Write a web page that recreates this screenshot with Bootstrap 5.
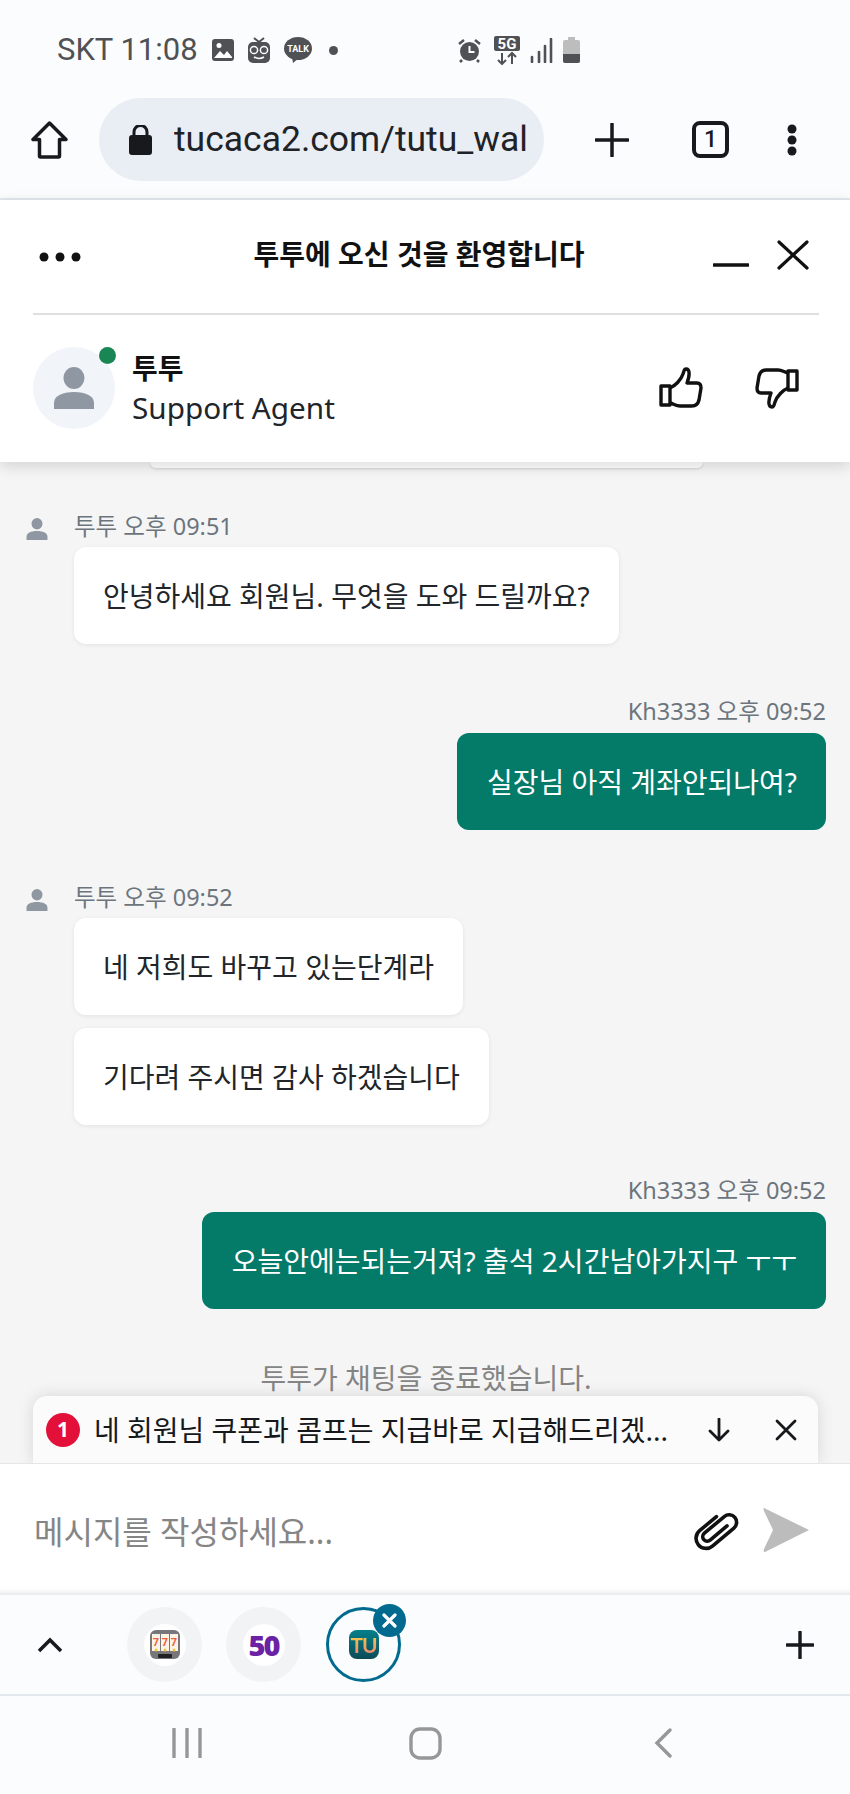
<!DOCTYPE html>
<html lang="ko">
<head>
  <meta charset="UTF-8" />
  <meta name="viewport" content="width=device-width, initial-scale=1.0"/>
  <title>투투 채팅</title>
  <link href="https://cdn.jsdelivr.net/npm/bootstrap@5.3.0/dist/css/bootstrap.min.css" rel="stylesheet">
  <style>
    html, body { margin: 0; background: #fbfcfe; }
    body { font-family: "Noto Sans", "Noto Sans CJK KR", sans-serif; }
    .phone { width: 850px; height: 1794px; overflow: hidden; }

    /* android status bar + browser toolbar */
    .statusbar { height: 90px; padding: 10px 0 0 57px; background: #fbfcfe; color: #4f5154; font-family: Roboto, sans-serif; font-size: 31px; }
    .status-time { width: 154px; }
    .status-ico { margin-right: 12px; }
    .status-ico-tight { margin-right: 10px; }
    .status-dot { width: 9px; height: 9px; border-radius: 50%; background: #4f5154; margin: 0 119px 0 16px; }
    .toolbar { height: 110px; padding: 0 0 9px 31px; background: #fbfcfe; border-bottom: 2px solid #e3e8ee; }
    .url-pill { width: 445px; height: 83px; margin-left: 31px; padding-left: 30px; border-radius: 42px; background: #e8eef3; color: #1f2226; font-family: Roboto, sans-serif; font-size: 35.5px; }
    .url-text { width: 352px; margin-left: 22px; overflow: hidden; white-space: nowrap; }
    .tool-plus { margin-left: 51px; }
    .tool-tabs { margin-left: 63px; width: 37px; height: 37px; border: 4px solid #17191c; border-radius: 8px; font: 500 23px Roboto, sans-serif; color: #17191c; }
    .tool-more { margin-left: 57px; }

    /* chat header */
    .chat-head { height: 262px; padding: 0 31px 0 33px; background: #fff; box-shadow: 0 4px 14px rgba(0,0,0,.14); position: relative; z-index: 3; }
    .head-top { height: 115px; border-bottom: 2px solid #dedfe0; }
    .head-dots { width: 42px; margin-left: 6px; }
    .head-title { font-size: 28px; font-weight: 700; color: #111; width: 632px; text-align: center; margin-left: 22px; padding-bottom: 6px; white-space: nowrap; }
    .head-min { margin-left: -22px; margin-top: 3px; }
    .head-close { margin-left: 28px; margin-bottom: 4px; }
    .agent-row { padding-top: 32px; }
    .agent-pic { width: 82px; height: 82px; border-radius: 50%; background: #f1f5f9; position: relative; flex: none; }
    .agent-dot { position: absolute; right: -1px; top: 0; width: 17px; height: 17px; border-radius: 50%; background: #198754; }
    .agent-name { font-size: 28px; font-weight: 700; color: #111; line-height: 40px; margin-top: 1px; margin-left: -1px; }
    .agent-role { font-size: 29.7px; color: #212529; line-height: 40px; margin-left: -1px; }
    .agent-text { margin-left: 18px; }
    .agent-thumbs { margin-left: auto; margin-right: 20px; gap: 52px; }

    /* messages */
    .chat-body { height: 1001px; background: #f5f5f5; padding: 0 24px 0 26px; position: relative; overflow: hidden; }
    .peek-bubble { height: 6px; margin: 0 123px 43px 124px; background: #fff; border-radius: 0 0 12px 12px; box-shadow: 0 1px 3px rgba(0,0,0,.14); }
    .msg-meta { height: 30px; line-height: 30px; font-size: 23.5px; color: #6c757d; margin-bottom: 6px; }
    .msg-out .msg-meta { margin-bottom: 7px; }
    .meta-ico { width: 48px; }
    .bubble { height: 97px; padding: 0 29px; border-radius: 12px; font-size: 28px; white-space: nowrap; }
    .bubble-in { background: #fff; color: #212529; margin-left: 48px; box-shadow: 0 1px 4px rgba(0,0,0,.08); }
    .bubble-out { background: #047a69; color: #fff; padding-left: 30px; }
    .bubble-gap { margin-bottom: 13px; }
    .msg-in, .msg-out { margin-bottom: 52px; }
    .msg-in.msg-tight { margin-bottom: 50px; }
    .ended-note { font-size: 28px; color: #858585; text-align: center; margin-top: -3px; line-height: 40px; }
    .notify-bar { position: absolute; left: 33px; right: 32px; bottom: 0; height: 67px; background: #fbfbfb; border-radius: 14px 14px 0 0; box-shadow: 0 0 16px rgba(0,0,0,.13); padding-left: 13px; }
    .notify-count { width: 34px; height: 34px; border-radius: 50%; background: #e31039; color: #fff; font-size: 21px; font-weight: 700; flex: none; }
    .notify-text { font-size: 28px; color: #16181b; margin-left: 14px; width: 575px; white-space: nowrap; overflow: hidden; }
    .notify-down { margin-left: 39px; }
    .notify-close { margin-left: 45px; }

    /* composer */
    .composer { height: 132px; background: #fff; border-top: 1px solid #e6e6e6; padding: 0 40px 0 34px; box-shadow: inset 0 -7px 7px -6px rgba(0,0,0,.14); }
    .composer-input { font-size: 32px; color: #858585; margin-top: 5px; }
    .composer-clip { margin-left: auto; margin-right: 20px; }

    /* bottom tabs + android nav */
    .tabbar { height: 101px; background: #fbfcfe; border-bottom: 2px solid #e3e8ee; padding-left: 37px; }
    .tab-bubbles { margin-left: 64px; gap: 24px; }
    .tab-circle { width: 75px; height: 75px; border-radius: 50%; background: #f2f3f5; position: relative; }
    .tab-face { width: 42px; height: 42px; border-radius: 50%; background: #fff; }
    .tab-active { margin-left: 1px; background: #fbfcfe; border: 3px solid #016b8f; }
    .fifty { font: 800 29px/1 "Open Sans", sans-serif; letter-spacing: -2px; color: #6b22a5; }
    .tu-logo { width: 30px; height: 29px; border-radius: 8px; background: linear-gradient(#047f8a, #0b4c58); font: 700 21px/29px Lato, sans-serif; letter-spacing: -1px; text-align: center; color: #f6c84a; }
    .tu-text { background: linear-gradient(#f7d43f, #ee7f78); -webkit-background-clip: text; background-clip: text; color: transparent; }
    .tab-x { position: absolute; right: -8px; top: -6px; width: 33px; height: 33px; border-radius: 50%; background: #016b8f; }
    .tab-plus { margin-left: auto; margin-right: 36px; }
    .navbar-android { height: 98px; background: #fbfcfe; padding-bottom: 4px; }
    .nav-slot { width: 238px; }
  </style>
</head>
<body>
<div class="phone d-flex flex-column">

  <div class="statusbar d-flex align-items-center">
    <span class="status-time">SKT 11:08</span>
    <svg class="status-ico" width="24" height="24" viewBox="0 0 24 24"><rect x="1" y="1" width="22" height="22" rx="3" fill="#4f5154"/><path d="M3 20l6-7 4 4 3-4 5 6v1H3z" fill="#fff"/><circle cx="8" cy="7.500" r="2.500" fill="#fff"/></svg>
    <svg class="status-ico" width="24" height="26" viewBox="0 0 24 26"><path d="M7 1l5 4 5-4" fill="none" stroke="#4f5154" stroke-width="2"/><rect x="1" y="5" width="22" height="21" rx="5" fill="#4f5154"/><circle cx="7" cy="13" r="3.600" fill="none" stroke="#fff" stroke-width="1.500"/><circle cx="17" cy="13" r="3.600" fill="none" stroke="#fff" stroke-width="1.500"/><path d="M7 20q5 3 10 0" fill="none" stroke="#fff" stroke-width="1.500"/></svg>
    <svg width="30" height="26" viewBox="0 0 30 26"><ellipse cx="15" cy="11.500" rx="14" ry="11.500" fill="#4f5154"/><path d="M9 20l1 6 6-5z" fill="#4f5154"/><text x="15" y="15" font-size="9" font-weight="700" text-anchor="middle" fill="#fff" font-family="Roboto, sans-serif">TALK</text></svg>
    <span class="status-dot"></span>
    <svg class="status-ico" width="25" height="25" viewBox="0 0 25 25"><circle cx="12.500" cy="13.500" r="9.500" fill="#4f5154"/><path d="M2 6l5-4M23 6l-5-4" stroke="#4f5154" stroke-width="2.500"/><path d="M5 22l-2 2M20 22l2 2" stroke="#4f5154" stroke-width="2.500"/><path d="M12.500 8v6h5" fill="none" stroke="#fff" stroke-width="2"/></svg>
    <svg class="status-ico-tight" width="26" height="29" viewBox="0 0 26 29"><rect x="0" y="0" width="26" height="15" rx="2" fill="#4f5154"/><text x="13" y="13" font-size="15" font-weight="700" text-anchor="middle" fill="#fff" font-family="Roboto, sans-serif">5G</text><path d="M8 17v11M4 24l4 4 4-4M18 28V17M14 21l4-4 4 4" fill="none" stroke="#4f5154" stroke-width="2"/></svg>
    <svg class="status-ico-tight" width="23" height="25" viewBox="0 0 23 25"><path d="M2 19v5M9 14v10M15 8v16M21 1v23" stroke="#4f5154" stroke-width="2.600" stroke-linecap="round" fill="none"/></svg>
    <svg width="17" height="26" viewBox="0 0 17 26"><path d="M5 0h7v3h3q2 0 2 2v19q0 2-2 2H2q-2 0-2-2V5q0-2 2-2h3z" fill="#bdbdbd"/><path d="M0 17h17v7q0 2-2 2H2q-2 0-2-2z" fill="#4f5154"/></svg>
  </div>

  <div class="toolbar d-flex align-items-center">
    <svg width="37" height="38" viewBox="0 0 37 38"><path d="M18.500 2L2 18.500h6.500V35q0 1 1 1h18q1 0 1-1V18.500H35z" fill="none" stroke="#17191c" stroke-width="3.500" stroke-linejoin="round"/></svg>
    <div class="url-pill d-flex align-items-center">
      <svg width="23" height="30" viewBox="0 0 23 30"><rect x="0" y="10" width="23" height="20" rx="3" fill="#17191c"/><path d="M5 11V7a6.500 6.500 0 0 1 13 0v4" fill="none" stroke="#17191c" stroke-width="3"/></svg>
      <div class="url-text">tucaca2.com/tutu_wal</div>
    </div>
    <svg class="tool-plus" width="34" height="34" viewBox="0 0 34 34"><path d="M17 1v32M1 17h32" stroke="#17191c" stroke-width="3.500" stroke-linecap="round"/></svg>
    <div class="tool-tabs d-flex align-items-center justify-content-center">1</div>
    <svg class="tool-more" width="12" height="32" viewBox="0 0 12 32"><circle cx="6" cy="5" r="4.500" fill="#17191c"/><circle cx="6" cy="16" r="4.500" fill="#17191c"/><circle cx="6" cy="27" r="4.500" fill="#17191c"/></svg>
  </div>

  <div class="chat-head">
    <div class="head-top d-flex align-items-center">
      <svg class="head-dots" width="42" height="10" viewBox="0 0 42 10"><circle cx="5" cy="5" r="4.500" fill="#111"/><circle cx="21" cy="5" r="4.500" fill="#111"/><circle cx="37" cy="5" r="4.500" fill="#111"/></svg>
      <div class="head-title">투투에 오신 것을 환영합니다</div>
      <svg class="head-min" width="36" height="20" viewBox="0 0 36 20"><path d="M1 17h34" stroke="#111" stroke-width="3.500" stroke-linecap="round"/></svg>
      <svg class="head-close" width="32" height="30" viewBox="0 0 32 30"><path d="M2 2l28 26M30 2L2 28" stroke="#111" stroke-width="3.200" stroke-linecap="round"/></svg>
    </div>
    <div class="agent-row d-flex">
      <div class="agent-pic d-flex align-items-center justify-content-center">
        <svg width="42" height="42" viewBox="0 0 42 42"><ellipse cx="21" cy="11" rx="10.500" ry="11" fill="#8f98a2"/><path d="M1 42v-6c0-7 8-11 20-11s20 4 20 11v6z" fill="#8f98a2"/></svg>
        <span class="agent-dot"></span>
      </div>
      <div class="agent-text">
        <div class="agent-name">투투</div>
        <div class="agent-role">Support Agent</div>
      </div>
      <div class="agent-thumbs d-flex align-items-center">
        <svg width="44" height="42" viewBox="0 0 44 42"><path d="M2 19h9v19H2z" fill="none" stroke="#111" stroke-width="3.400" stroke-linejoin="round"/><path d="M11 21c5-2 11-8 13-14 1-3 1-5 3-5 4 0 4 6 1 14h10c3 0 4 2 4 5l-2 12c-1 4-3 6-7 6H21c-4 0-6-2-10-3" fill="none" stroke="#111" stroke-width="3.400" stroke-linejoin="round"/></svg>
        <svg width="44" height="42" viewBox="0 0 44 42"><path d="M42 23h-9V4h9z" fill="none" stroke="#111" stroke-width="3.400" stroke-linejoin="round"/><path d="M33 21c-5 2-11 8-13 14-1 3-1 5-3 5-4 0-4-6-1-14H6c-3 0-4-2-4-5L4 9c1-4 3-6 7-6h12c4 0 6 2 10 3" fill="none" stroke="#111" stroke-width="3.400" stroke-linejoin="round"/></svg>
      </div>
    </div>
  </div>

  <div class="chat-body">
    <div class="peek-bubble"></div>

    <div class="msg-in">
      <div class="msg-meta d-flex align-items-center">
        <div class="meta-ico"><svg width="22" height="22" viewBox="0 0 42 42"><ellipse cx="21" cy="11" rx="10.500" ry="11" fill="#8f98a2"/><path d="M1 42v-6c0-7 8-11 20-11s20 4 20 11v6z" fill="#8f98a2"/></svg></div>
        <span>투투 오후 09:51</span>
      </div>
      <div class="d-flex"><div class="bubble bubble-in d-flex align-items-center">안녕하세요 회원님. 무엇을 도와 드릴까요?</div></div>
    </div>

    <div class="msg-out">
      <div class="msg-meta text-end">Kh3333 오후 09:52</div>
      <div class="d-flex justify-content-end"><div class="bubble bubble-out d-flex align-items-center">실장님 아직 계좌안되나여?</div></div>
    </div>

    <div class="msg-in msg-tight">
      <div class="msg-meta d-flex align-items-center">
        <div class="meta-ico"><svg width="22" height="22" viewBox="0 0 42 42"><ellipse cx="21" cy="11" rx="10.500" ry="11" fill="#8f98a2"/><path d="M1 42v-6c0-7 8-11 20-11s20 4 20 11v6z" fill="#8f98a2"/></svg></div>
        <span>투투 오후 09:52</span>
      </div>
      <div class="d-flex bubble-gap"><div class="bubble bubble-in d-flex align-items-center">네 저희도 바꾸고 있는단계라</div></div>
      <div class="d-flex"><div class="bubble bubble-in d-flex align-items-center">기다려 주시면 감사 하겠습니다</div></div>
    </div>

    <div class="msg-out">
      <div class="msg-meta text-end">Kh3333 오후 09:52</div>
      <div class="d-flex justify-content-end"><div class="bubble bubble-out d-flex align-items-center">오늘안에는되는거져? 출석 2시간남아가지구 ㅜㅜ</div></div>
    </div>

    <div class="ended-note">투투가 채팅을 종료했습니다.</div>

    <div class="notify-bar d-flex align-items-center">
      <div class="notify-count d-flex align-items-center justify-content-center">1</div>
      <div class="notify-text">네 회원님 쿠폰과 콤프는 지급바로 지급해드리겠...</div>
      <svg class="notify-down" width="22" height="24" viewBox="0 0 22 24"><path d="M11 1v21M2 13l9 9 9-9" fill="none" stroke="#16181b" stroke-width="2.800" stroke-linecap="round" stroke-linejoin="round"/></svg>
      <svg class="notify-close" width="22" height="22" viewBox="0 0 22 22"><path d="M2 2l18 18M20 2L2 20" stroke="#16181b" stroke-width="2.800" stroke-linecap="round"/></svg>
    </div>
  </div>

  <div class="composer d-flex align-items-center">
    <div class="composer-input">메시지를 작성하세요...</div>
    <svg class="composer-clip" width="50" height="46" viewBox="0 0 50 46"><g transform="translate(25 23) rotate(50) translate(-13 -24)"><path d="M17 13V35a4.500 4.500 0 0 1-9 0V9a7.500 7.500 0 0 1 15 0V37a10 10 0 0 1-20 0V15" fill="none" stroke="#111" stroke-width="3.600" stroke-linecap="round"/></g></svg>
    <svg width="49" height="44" viewBox="0 0 49 44"><path d="M3 0q-1 0 0 3l9 19-9 19q-1 3 1 3L48 22z" fill="#bcbcbc"/></svg>
  </div>

  <div class="tabbar d-flex align-items-center">
    <svg width="26" height="16" viewBox="0 0 26 16"><path d="M2 14L13 3l11 11" fill="none" stroke="#17191c" stroke-width="3.500" stroke-linejoin="miter"/></svg>
    <div class="tab-bubbles d-flex align-items-center">
      <div class="tab-circle d-flex align-items-center justify-content-center">
        <div class="tab-face d-flex align-items-center justify-content-center">
          <svg width="30" height="30" viewBox="0 0 30 30"><rect x="0" y="0" width="30" height="29" rx="6" fill="#77777b"/><rect x="2" y="4" width="8" height="17" fill="#fbf3e6"/><rect x="11" y="4" width="8" height="17" fill="#fbf3e6"/><rect x="20" y="4" width="8" height="17" fill="#fbf3e6"/><text x="6" y="16" font-size="11" font-weight="700" text-anchor="middle" fill="#ef5a3a" font-family="Roboto, sans-serif">7</text><text x="15" y="16" font-size="11" font-weight="700" text-anchor="middle" fill="#ef5a3a" font-family="Roboto, sans-serif">7</text><text x="24" y="16" font-size="11" font-weight="700" text-anchor="middle" fill="#ef5a3a" font-family="Roboto, sans-serif">7</text><circle cx="6" cy="20" r="1.500" fill="#f3c23c"/><circle cx="15" cy="20" r="1.500" fill="#f3c23c"/><circle cx="24" cy="20" r="1.500" fill="#f3c23c"/><rect x="8" y="24" width="14" height="4" rx="1" fill="#222"/></svg>
        </div>
      </div>
      <div class="tab-circle d-flex align-items-center justify-content-center">
        <div class="tab-face d-flex align-items-center justify-content-center"><span class="fifty">50</span></div>
      </div>
      <div class="tab-circle tab-active d-flex align-items-center justify-content-center">
        <div class="tu-logo"><span class="tu-text">TU</span></div>
        <div class="tab-x d-flex align-items-center justify-content-center">
          <svg width="15" height="15" viewBox="0 0 15 15"><path d="M2 2l11 11M13 2L2 13" stroke="#fff" stroke-width="3.200" stroke-linecap="round"/></svg>
        </div>
      </div>
    </div>
    <svg class="tab-plus" width="28" height="28" viewBox="0 0 28 28"><path d="M14 1v26M1 14h26" stroke="#17191c" stroke-width="3.400" stroke-linecap="round"/></svg>
  </div>

  <div class="navbar-android d-flex align-items-center justify-content-center">
    <div class="nav-slot d-flex justify-content-center"><svg width="30" height="30" viewBox="0 0 30 30"><path d="M2 1v28M15 1v28M28 1v28" stroke="#979797" stroke-width="3.400" stroke-linecap="round"/></svg></div>
    <div class="nav-slot d-flex justify-content-center"><svg width="33" height="33" viewBox="0 0 33 33"><rect x="2" y="2" width="29" height="29" rx="9" fill="none" stroke="#979797" stroke-width="3.400"/></svg></div>
    <div class="nav-slot d-flex justify-content-center"><svg width="18" height="30" viewBox="0 0 18 30"><path d="M16 2L3 15l13 13" fill="none" stroke="#979797" stroke-width="3.400" stroke-linecap="round"/></svg></div>
  </div>
</div>
<script src="https://cdn.jsdelivr.net/npm/bootstrap@5.3.0/dist/js/bootstrap.bundle.min.js"></script>
</body>
</html>
